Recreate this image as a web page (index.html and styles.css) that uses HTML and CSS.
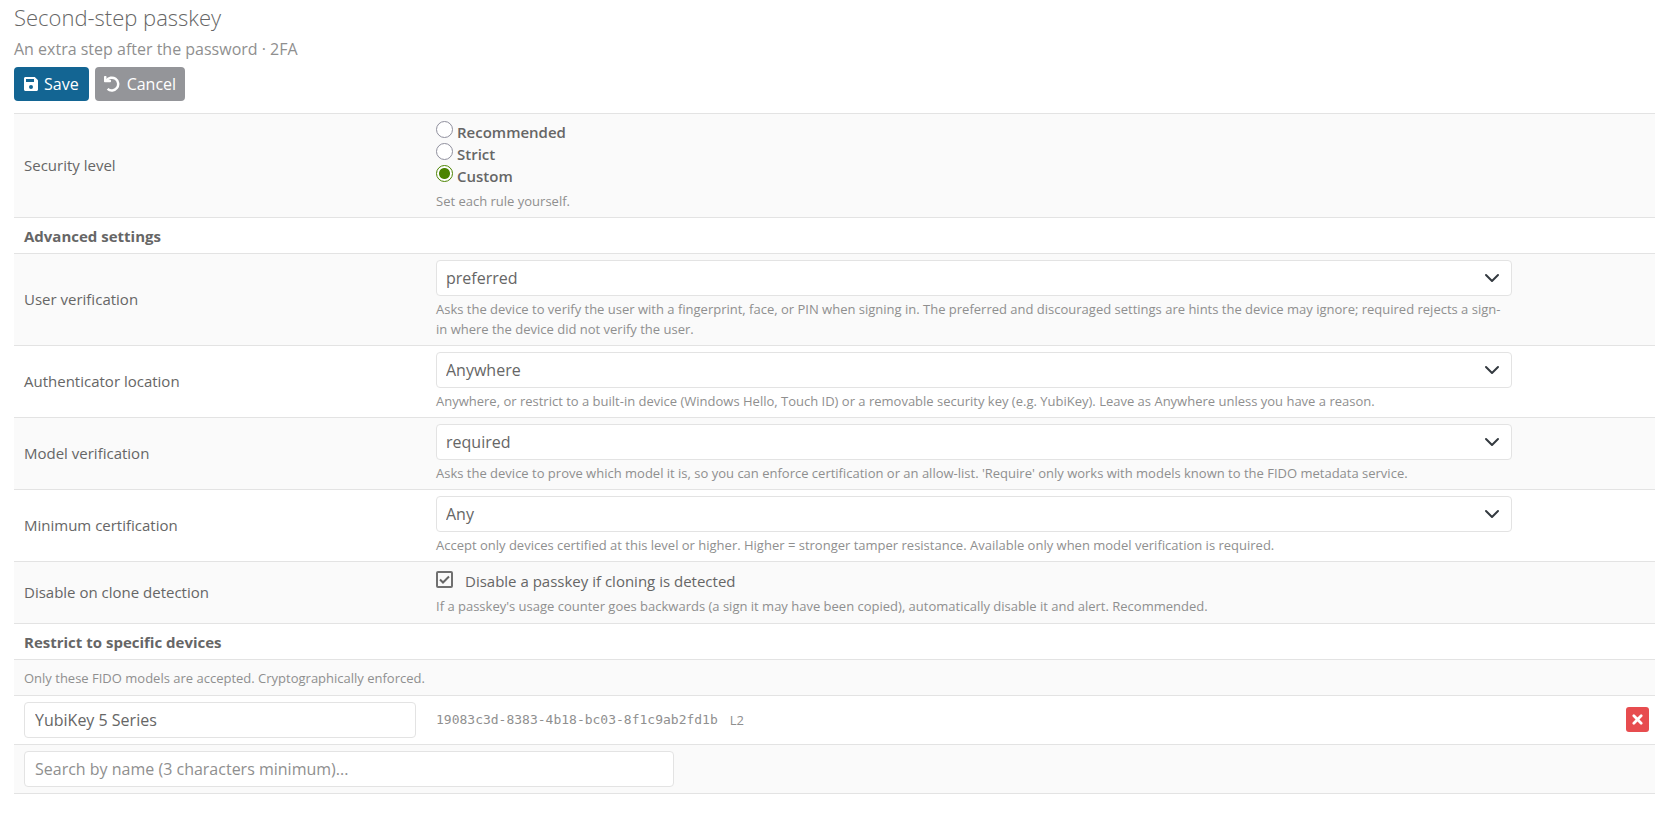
FILE: index.html
```html
<!DOCTYPE html>
<html lang="en">
<head>
<meta charset="utf-8">
<title>Second-step passkey</title>
<link rel="stylesheet" href="styles.css">
</head>
<body>
<form class="page">
  <header class="page-header">
    <h1 class="title">Second-step passkey</h1>
    <p class="subtitle">An extra step after the password · 2FA</p>
    <div class="actions">
      <button type="button" class="btn btn-save">
        <svg class="icon-save" viewBox="0 0 448 448" aria-hidden="true"><path fill="currentColor" fill-rule="evenodd" d="M48 0h278c13 0 25 5 34 14l74 74c9 9 14 21 14 34v278c0 27-21 48-48 48H48c-27 0-48-21-48-48V48C0 21 21 0 48 0zM64 64v96h256V64zM224 256a64 64 0 1 0 0 128 64 64 0 0 0 0-128z"/></svg>
        Save
      </button>
      <button type="button" class="btn btn-cancel">
        <svg class="icon-undo" viewBox="0 0 16 16" aria-hidden="true"><path fill="none" stroke="currentColor" stroke-width="2.5" d="M2.4 4.6A6.4 6.4 0 1 1 3.6 12.9"/><path fill="currentColor" d="M0 .7Q0 0 .8 0h1q.7 0 .7.8v3h3.700q.8 0 .8.8v.9q0 .8-.8.8H.8Q0 6.300 0 5.500z"/></svg>
        Cancel
      </button>
    </div>
  </header>

  <div class="settings">
    <div class="row shaded" role="radiogroup" aria-labelledby="level">
      <span class="name" id="level">Security level</span>
      <div class="field">
        <div class="choices">
          <label class="choice"><input type="radio" name="level" class="radio">Recommended</label>
          <label class="choice"><input type="radio" name="level" class="radio">Strict</label>
          <label class="choice"><input type="radio" name="level" class="radio" checked>Custom</label>
        </div>
        <p class="help">Set each rule yourself.</p>
      </div>
    </div>
    <div class="row"><h2 class="section">Advanced settings</h2></div>
    <div class="row shaded">
      <label class="name" for="verification">User verification</label>
      <div class="field">
        <select id="verification" class="control select"><option>preferred</option></select>
        <p class="help">Asks the device to verify the user with a fingerprint, face, or PIN when signing in. The preferred and discouraged settings are hints the device may ignore; required rejects a sign-in where the device did not verify the user.</p>
      </div>
    </div>
    <div class="row">
      <label class="name" for="location">Authenticator location</label>
      <div class="field">
        <select id="location" class="control select"><option>Anywhere</option></select>
        <p class="help">Anywhere, or restrict to a built-in device (Windows Hello, Touch ID) or a removable security key (e.g. YubiKey). Leave as Anywhere unless you have a reason.</p>
      </div>
    </div>
    <div class="row shaded">
      <label class="name" for="model">Model verification</label>
      <div class="field">
        <select id="model" class="control select"><option>required</option></select>
        <p class="help">Asks the device to prove which model it is, so you can enforce certification or an allow-list. 'Require' only works with models known to the FIDO metadata service.</p>
      </div>
    </div>
    <div class="row">
      <label class="name" for="certification">Minimum certification</label>
      <div class="field">
        <select id="certification" class="control select"><option>Any</option></select>
        <p class="help">Accept only devices certified at this level or higher. Higher = stronger tamper resistance. Available only when model verification is required.</p>
      </div>
    </div>
    <div class="row shaded">
      <span class="name">Disable on clone detection</span>
      <div class="field">
        <label class="check-label"><input type="checkbox" class="checkbox" checked>Disable a passkey if cloning is detected</label>
        <p class="help">If a passkey's usage counter goes backwards (a sign it may have been copied), automatically disable it and alert. Recommended.</p>
      </div>
    </div>
    <div class="row"><h2 class="section">Restrict to specific devices</h2></div>
    <div class="row shaded"><p class="note">Only these FIDO models are accepted. Cryptographically enforced.</p></div>
    <div class="row">
      <div class="device-name"><input type="text" class="control" aria-label="Device name" value="YubiKey 5 Series"></div>
      <div class="device-id"><code class="guid">19083c3d-8383-4b18-bc03-8f1c9ab2fd1b</code><span>L2</span></div>
      <div class="device-action">
        <button type="button" class="btn-remove" aria-label="Remove device">
          <svg class="icon-remove" viewBox="0 0 12 12" aria-hidden="true"><path fill="none" stroke="currentColor" stroke-width="3" stroke-linecap="round" d="M2 2l8 8M10 2l-8 8"/></svg>
        </button>
      </div>
    </div>
    <div class="row shaded last">
      <div class="search"><input type="text" class="control" aria-label="Search devices" placeholder="Search by name (3 characters minimum)..."></div>
    </div>
  </div>
</form>
</body>
</html>
```
FILE: styles.css
```css
* { box-sizing: border-box; }

body {
  margin: 0;
  background: #fff;
  color: #666;
  font-family: "Open Sans", "Noto Sans", sans-serif;
  font-size: 15px;
  line-height: 23px;
}

h1, h2, p { margin: 0; }

.page { padding-left: 14px; }

.page-header { padding-bottom: 12px; }

.title {
  font-size: 22px;
  font-weight: 300;
  line-height: 34px;
}

.subtitle {
  padding: 3px 0 6px;
  color: #8f8f8f;
  font-size: 16px;
  line-height: 24px;
}

.actions { display: flex; gap: 6px; }

.btn {
  display: flex;
  align-items: center;
  height: 34px;
  padding: 0 10px;
  border: 0;
  border-radius: 4px;
  color: #fff;
  font-family: inherit;
  font-size: 16px;
}

.btn-save { gap: 6px; background: #136593; }
.btn-cancel { gap: 7px; padding: 0 9px; background: #949599; }
.icon-save { width: 14px; height: 14px; }
.icon-undo { width: 16px; height: 16px; }

.row {
  display: grid;
  grid-template-columns: 412fr 1096fr 133fr;
  align-items: center;
  border-top: 1px solid #e3e3e3;
}

.shaded { background: #fafafa; }
.last { border-bottom: 1px solid #e3e3e3; }

.name { padding: 6px 10px; }
.field { padding: 6px 10px; }

.section {
  grid-column: 1 / -1;
  padding: 7px 10px 5px;
  font-size: 15px;
  font-weight: 700;
}

.help, .note, .device-id {
  color: #8f8f8f;
  font-size: 13px;
  line-height: 20px;
}

.help {
  margin-top: 3px;
  padding-right: 4px;
}

.note {
  grid-column: 1 / -1;
  padding: 8px 10px 7px;
}

.control {
  display: block;
  width: 100%;
  height: 36px;
  padding: 0 10px;
  border: 1px solid #e3e3e3;
  border-radius: 4px;
  background-color: #fff;
  color: #666;
  font-family: inherit;
  font-size: 16px;
}

.control::placeholder { color: #8f8f8f; opacity: 1; }

.select {
  appearance: none;
  padding: 0 36px 0 9px;
  background-image: url("data:image/svg+xml,%3Csvg xmlns='http://www.w3.org/2000/svg' viewBox='0 0 16 16'%3E%3Cpath fill='none' stroke='%23343a40' stroke-linecap='round' stroke-linejoin='round' stroke-width='2' d='M2 5l6 6 6-6'/%3E%3C/svg%3E");
  background-repeat: no-repeat;
  background-position: right 11px center;
  background-size: 16px 16px;
}

.choices { padding: 1px 0; }

.choice {
  display: flex;
  align-items: center;
  gap: 4px;
  font-weight: 600;
  line-height: 22px;
}

.radio {
  appearance: none;
  width: 17px;
  height: 17px;
  margin: 0 0 5px;
  border: 1px solid #8f8f9d;
  border-radius: 50%;
  background: #fff;
}

.radio:checked {
  border-color: #4b8400;
  background: radial-gradient(circle, #4b8400 5px, #fff 6px);
}

.check-label {
  display: flex;
  align-items: center;
  gap: 12px;
  padding-top: 2px;
  line-height: 23px;
}

.checkbox {
  appearance: none;
  width: 17px;
  height: 17px;
  margin: 0 0 4px;
  border: 2px solid #707070;
  border-radius: 2px;
}

.checkbox:checked {
  background: url("data:image/svg+xml,%3Csvg xmlns='http://www.w3.org/2000/svg' viewBox='0 0 13 13'%3E%3Cpath fill='none' stroke='%23666' stroke-width='2' d='M2 6.500l3 3 6-6'/%3E%3C/svg%3E") center / 13px 13px no-repeat;
}

.field:has(.checkbox) { padding-bottom: 7px; }

.device-name { padding: 6px 10px; }

.device-id {
  display: flex;
  gap: 12px;
  padding: 0 10px;
}

.guid {
  font-family: "DejaVu Sans Mono", monospace;
  font-size: 13px;
}

.device-action {
  display: flex;
  justify-content: flex-end;
  padding: 0 6px 2px 0;
}

.btn-remove {
  display: flex;
  align-items: center;
  justify-content: center;
  width: 23px;
  height: 25px;
  padding: 0;
  border: 0;
  border-radius: 3px;
  background: #e74c4f;
  color: #fff;
}

.icon-remove { width: 11px; height: 11px; }

.search {
  grid-column: 1 / -1;
  width: 100%;
  max-width: 670px;
  padding: 6px 10px;
}
```
